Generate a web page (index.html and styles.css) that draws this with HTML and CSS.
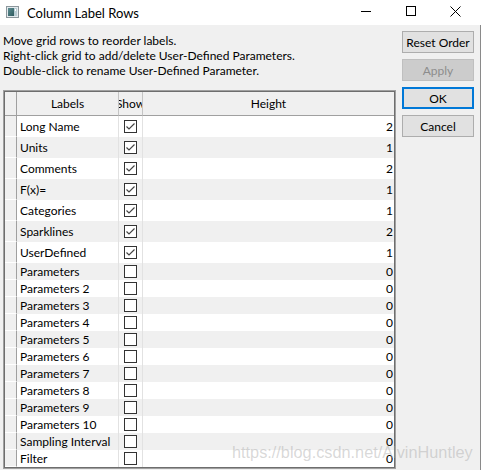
FILE: index.html
```html
<!DOCTYPE html>
<html>
<head>
<meta charset="utf-8">
<title>Column Label Rows</title>
<link rel="stylesheet" href="styles.css">
</head>
<body>
<div class="window">
  <div class="titlebar">
    <svg class="app-icon" width="13" height="12" viewBox="0 0 13 12">
      <rect x="0.5" y="0.5" width="12" height="11" fill="#e4eaee" stroke="#8c979c"/>
      <defs>
        <linearGradient id="g" x1="0" y1="0" x2="1" y2="1">
          <stop offset="0" stop-color="#5d8f94"/>
          <stop offset="1" stop-color="#2f5a5e"/>
        </linearGradient>
      </defs>
      <rect x="2" y="2" width="6" height="8" fill="url(#g)"/>
      <rect x="8" y="2" width="3" height="8" fill="#b9cdd4"/>
      <rect x="9" y="3" width="1" height="2" fill="#ffffff"/>
    </svg>
    <span class="title">Column Label Rows</span>
    <div class="controls">
      <div class="ctl">
        <svg width="10" height="10" viewBox="0 0 10 10"><path d="M0 5.5H10" stroke="#000" stroke-width="1"/></svg>
      </div>
      <div class="ctl">
        <svg width="10" height="10" viewBox="0 0 10 10"><rect x="0.5" y="0.5" width="9" height="9" fill="none" stroke="#000" stroke-width="1"/></svg>
      </div>
      <div class="ctl">
        <svg width="11" height="11" viewBox="0 0 11 11"><path d="M0.5 0.5L10.5 10.5M10.5 0.5L0.5 10.5" stroke="#000" stroke-width="1"/></svg>
      </div>
    </div>
  </div>

  <div class="content">
    <div class="main">
      <div class="info">
        <div>Move grid rows to reorder labels.</div>
        <div>Right-click grid to add/delete User-Defined Parameters.</div>
        <div>Double-click to rename User-Defined Parameter.</div>
      </div>
      <div class="grid-outer">
        <div class="grid">
          <div class="row head">
            <div class="rh"></div>
            <div class="hc">Labels</div>
            <div class="hc"><span>Show</span></div>
            <div class="hc last">Height</div>
          </div>

          <div class="row tall even"><div class="rh"></div><div class="lc">Long Name</div><div class="sc"><span class="cb on"><svg width="11" height="11" viewBox="0 0 11 11"><path d="M1.5 5.5L4 8L9.5 2.5" fill="none" stroke="#444" stroke-width="1.2"/></svg></span></div><div class="vc">2</div></div>
          <div class="row tall odd"><div class="rh"></div><div class="lc">Units</div><div class="sc"><span class="cb on"><svg width="11" height="11" viewBox="0 0 11 11"><path d="M1.5 5.5L4 8L9.5 2.5" fill="none" stroke="#444" stroke-width="1.2"/></svg></span></div><div class="vc">1</div></div>
          <div class="row tall even"><div class="rh"></div><div class="lc">Comments</div><div class="sc"><span class="cb on"><svg width="11" height="11" viewBox="0 0 11 11"><path d="M1.5 5.5L4 8L9.5 2.5" fill="none" stroke="#444" stroke-width="1.2"/></svg></span></div><div class="vc">2</div></div>
          <div class="row tall odd"><div class="rh"></div><div class="lc">F(x)=</div><div class="sc"><span class="cb on"><svg width="11" height="11" viewBox="0 0 11 11"><path d="M1.5 5.5L4 8L9.5 2.5" fill="none" stroke="#444" stroke-width="1.2"/></svg></span></div><div class="vc">1</div></div>
          <div class="row tall even"><div class="rh"></div><div class="lc">Categories</div><div class="sc"><span class="cb on"><svg width="11" height="11" viewBox="0 0 11 11"><path d="M1.5 5.5L4 8L9.5 2.5" fill="none" stroke="#444" stroke-width="1.2"/></svg></span></div><div class="vc">1</div></div>
          <div class="row tall odd"><div class="rh"></div><div class="lc">Sparklines</div><div class="sc"><span class="cb on"><svg width="11" height="11" viewBox="0 0 11 11"><path d="M1.5 5.5L4 8L9.5 2.5" fill="none" stroke="#444" stroke-width="1.2"/></svg></span></div><div class="vc">2</div></div>
          <div class="row tall even"><div class="rh"></div><div class="lc">UserDefined</div><div class="sc"><span class="cb on"><svg width="11" height="11" viewBox="0 0 11 11"><path d="M1.5 5.5L4 8L9.5 2.5" fill="none" stroke="#444" stroke-width="1.2"/></svg></span></div><div class="vc">1</div></div>

          <div class="row short odd"><div class="rh"></div><div class="lc">Parameters</div><div class="sc"><span class="cb"></span></div><div class="vc">0</div></div>
          <div class="row short even"><div class="rh"></div><div class="lc">Parameters 2</div><div class="sc"><span class="cb"></span></div><div class="vc">0</div></div>
          <div class="row short odd"><div class="rh"></div><div class="lc">Parameters 3</div><div class="sc"><span class="cb"></span></div><div class="vc">0</div></div>
          <div class="row short even"><div class="rh"></div><div class="lc">Parameters 4</div><div class="sc"><span class="cb"></span></div><div class="vc">0</div></div>
          <div class="row short odd"><div class="rh"></div><div class="lc">Parameters 5</div><div class="sc"><span class="cb"></span></div><div class="vc">0</div></div>
          <div class="row short even"><div class="rh"></div><div class="lc">Parameters 6</div><div class="sc"><span class="cb"></span></div><div class="vc">0</div></div>
          <div class="row short odd"><div class="rh"></div><div class="lc">Parameters 7</div><div class="sc"><span class="cb"></span></div><div class="vc">0</div></div>
          <div class="row short even"><div class="rh"></div><div class="lc">Parameters 8</div><div class="sc"><span class="cb"></span></div><div class="vc">0</div></div>
          <div class="row short odd"><div class="rh"></div><div class="lc">Parameters 9</div><div class="sc"><span class="cb"></span></div><div class="vc">0</div></div>
          <div class="row short even"><div class="rh"></div><div class="lc">Parameters 10</div><div class="sc"><span class="cb"></span></div><div class="vc">0</div></div>
          <div class="row short odd"><div class="rh"></div><div class="lc">Sampling Interval</div><div class="sc"><span class="cb"></span></div><div class="vc">0</div></div>
          <div class="row short even"><div class="rh"></div><div class="lc">Filter</div><div class="sc"><span class="cb"></span></div><div class="vc">0</div></div>
        </div>
      </div>
    </div>

    <div class="side">
      <button class="btn">Reset Order</button>
      <button class="btn disabled">Apply</button>
      <button class="btn default">OK</button>
      <button class="btn">Cancel</button>
    </div>
  </div>

  <div class="watermark">https://blog.csdn.net/AlvinHuntley</div>
</div>
</body>
</html>
```
FILE: styles.css
```css
* { box-sizing: border-box; }

html, body {
  margin: 0;
  padding: 0;
  background: #ffffff;
}

body {
  width: 482px;
  height: 470px;
  overflow: hidden;
  font-family: Lato, "Noto Sans", sans-serif;
  font-size: 12px;
  color: #000000;
}

.window {
  position: relative;
  width: 481px;
  height: 470px;
  display: flex;
  flex-direction: column;
}

/* ---------- title bar ---------- */
.titlebar {
  height: 25px;
  flex: none;
  background: #ffffff;
  display: flex;
  align-items: center;
}

.app-icon {
  display: block;
  margin-left: 6px;
  margin-top: -1px;
}

.title {
  margin-left: 8px;
  font-size: 13px;
  color: #000000;
}

.controls {
  margin-left: auto;
  padding-right: 3px;
  display: flex;
  height: 25px;
}

.ctl {
  width: 45px;
  height: 25px;
  display: flex;
  align-items: center;
  justify-content: center;
  padding-bottom: 3px;
}

.ctl svg { display: block; }

/* ---------- content ---------- */
.content {
  flex: 1;
  background: #f0f0f0;
  border-right: 1px solid #8a8a8a;
  display: flex;
  padding-left: 3px;
}

.main {
  width: 393px;
  display: flex;
  flex-direction: column;
}

.info {
  padding-top: 8px;
  line-height: 15px;
  margin-bottom: 12px;
  white-space: nowrap;
}

/* ---------- grid ---------- */
.grid-outer {
  width: 393px;
  height: 379px;
  border: 1px solid #a0a0a0;
}

.grid {
  width: 100%;
  height: 100%;
  border: 1px solid #6e6e6e;
  background: #ffffff;
  overflow: hidden;
}

.row {
  display: grid;
  grid-template-columns: 12px 102px 24px 1fr;
}

.row.head { height: 24px; }
.row.tall { height: 21px; }
.row.short { height: 17px; }

.row.even { background: #ffffff; }
.row.odd { background: #f0f0f0; }

.rh {
  background: #f0f0f0;
  border-right: 1px solid #a0a0a0;
  border-bottom: 1px solid #ffffff;
}

.head .rh {
  border-bottom: 1px solid #a0a0a0;
}

.hc {
  background: #f0f0f0;
  border-right: 1px solid #c4c4c4;
  border-bottom: 1px solid #a0a0a0;
  display: flex;
  align-items: center;
  justify-content: center;
  overflow: hidden;
  white-space: nowrap;
}

.hc.last { border-right: none; }

.hc span { flex: none; }

.lc {
  display: flex;
  align-items: center;
  padding-left: 3px;
  border-right: 1px solid #e2e2e2;
  white-space: nowrap;
  overflow: hidden;
}

.sc {
  display: flex;
  align-items: center;
  justify-content: center;
  border-right: 1px solid #e2e2e2;
  padding-right: 1px;
}

.cb {
  width: 13px;
  height: 13px;
  border: 1px solid #333333;
  background: #ffffff;
  display: block;
}

.cb svg { display: block; }

.vc {
  display: flex;
  align-items: center;
  justify-content: flex-end;
  padding-right: 1px;
}

/* ---------- buttons ---------- */
.side {
  margin-left: 6px;
  width: 72px;
  padding-top: 6px;
  display: flex;
  flex-direction: column;
  gap: 6px;
}

.btn {
  height: 22px;
  width: 72px;
  margin: 0;
  padding: 0;
  border: 1px solid #adadad;
  background: #e1e1e1;
  font: inherit;
  color: #000000;
  display: flex;
  align-items: center;
  justify-content: center;
}

.btn.disabled {
  background: #cccccc;
  border-color: #bfbfbf;
  color: #8c8c8c;
}

.btn.default {
  border: 1px solid #0078d7;
  box-shadow: inset 0 0 0 1px #0078d7;
}

/* ---------- watermark overlay ---------- */
.watermark {
  position: absolute;
  left: 232px;
  top: 443px;
  font-family: "Liberation Sans", Arial, sans-serif;
  font-size: 16.3px;
  line-height: 18px;
  color: rgba(170, 170, 170, 0.45);
  white-space: nowrap;
  pointer-events: none;
}
```
